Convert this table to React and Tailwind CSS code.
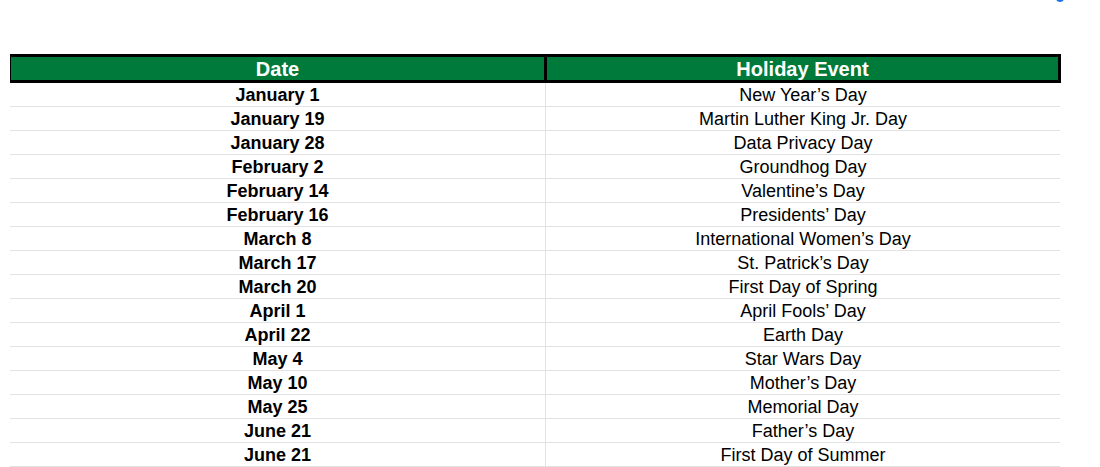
import React from 'react';

const holidays = [
  ['January 1', 'New Year’s Day'],
  ['January 19', 'Martin Luther King Jr. Day'],
  ['January 28', 'Data Privacy Day'],
  ['February 2', 'Groundhog Day'],
  ['February 14', 'Valentine’s Day'],
  ['February 16', 'Presidents’ Day'],
  ['March 8', 'International Women’s Day'],
  ['March 17', 'St. Patrick’s Day'],
  ['March 20', 'First Day of Spring'],
  ['April 1', 'April Fools’ Day'],
  ['April 22', 'Earth Day'],
  ['May 4', 'Star Wars Day'],
  ['May 10', 'Mother’s Day'],
  ['May 25', 'Memorial Day'],
  ['June 21', 'Father’s Day'],
  ['June 21', 'First Day of Summer'],
];

const App = () => {
  return (
    <div className="relative w-[1100px] h-[467px] bg-white overflow-hidden font-['Liberation_Sans',Arial,sans-serif] text-black">
      {/* selection handle peeking from above */}
      <div className="absolute left-[1056px] top-[-6px] w-[8px] h-[8px] rounded-full bg-[#1a73e8]" />

      <div className="pt-[54px] pl-[10px]">
        {/* header */}
        <div className="w-[1051px] h-[29px] flex border-t-[3px] border-b-[3px] border-r-[3px] border-l border-black bg-[#007a3b] text-white font-bold text-[20px] leading-none">
          <div className="w-[536px] flex items-center justify-center border-r-[3px] border-black">Date</div>
          <div className="flex-1 flex items-center justify-center">Holiday Event</div>
        </div>

        {/* rows */}
        <div className="w-[1050px]">
          {holidays.map(([date, name], i) => (
            <div key={i} className="grid grid-cols-[536px_1fr] h-[24px] border-b border-[#e2e2e2] text-[18px] leading-none">
              <div className="flex items-center justify-center font-bold border-r border-[#e2e2e2] pt-[1px]">{date}</div>
              <div className="flex items-center justify-center pt-[1px]">{name}</div>
            </div>
          ))}
        </div>
      </div>
    </div>
  );
};

export default App;
